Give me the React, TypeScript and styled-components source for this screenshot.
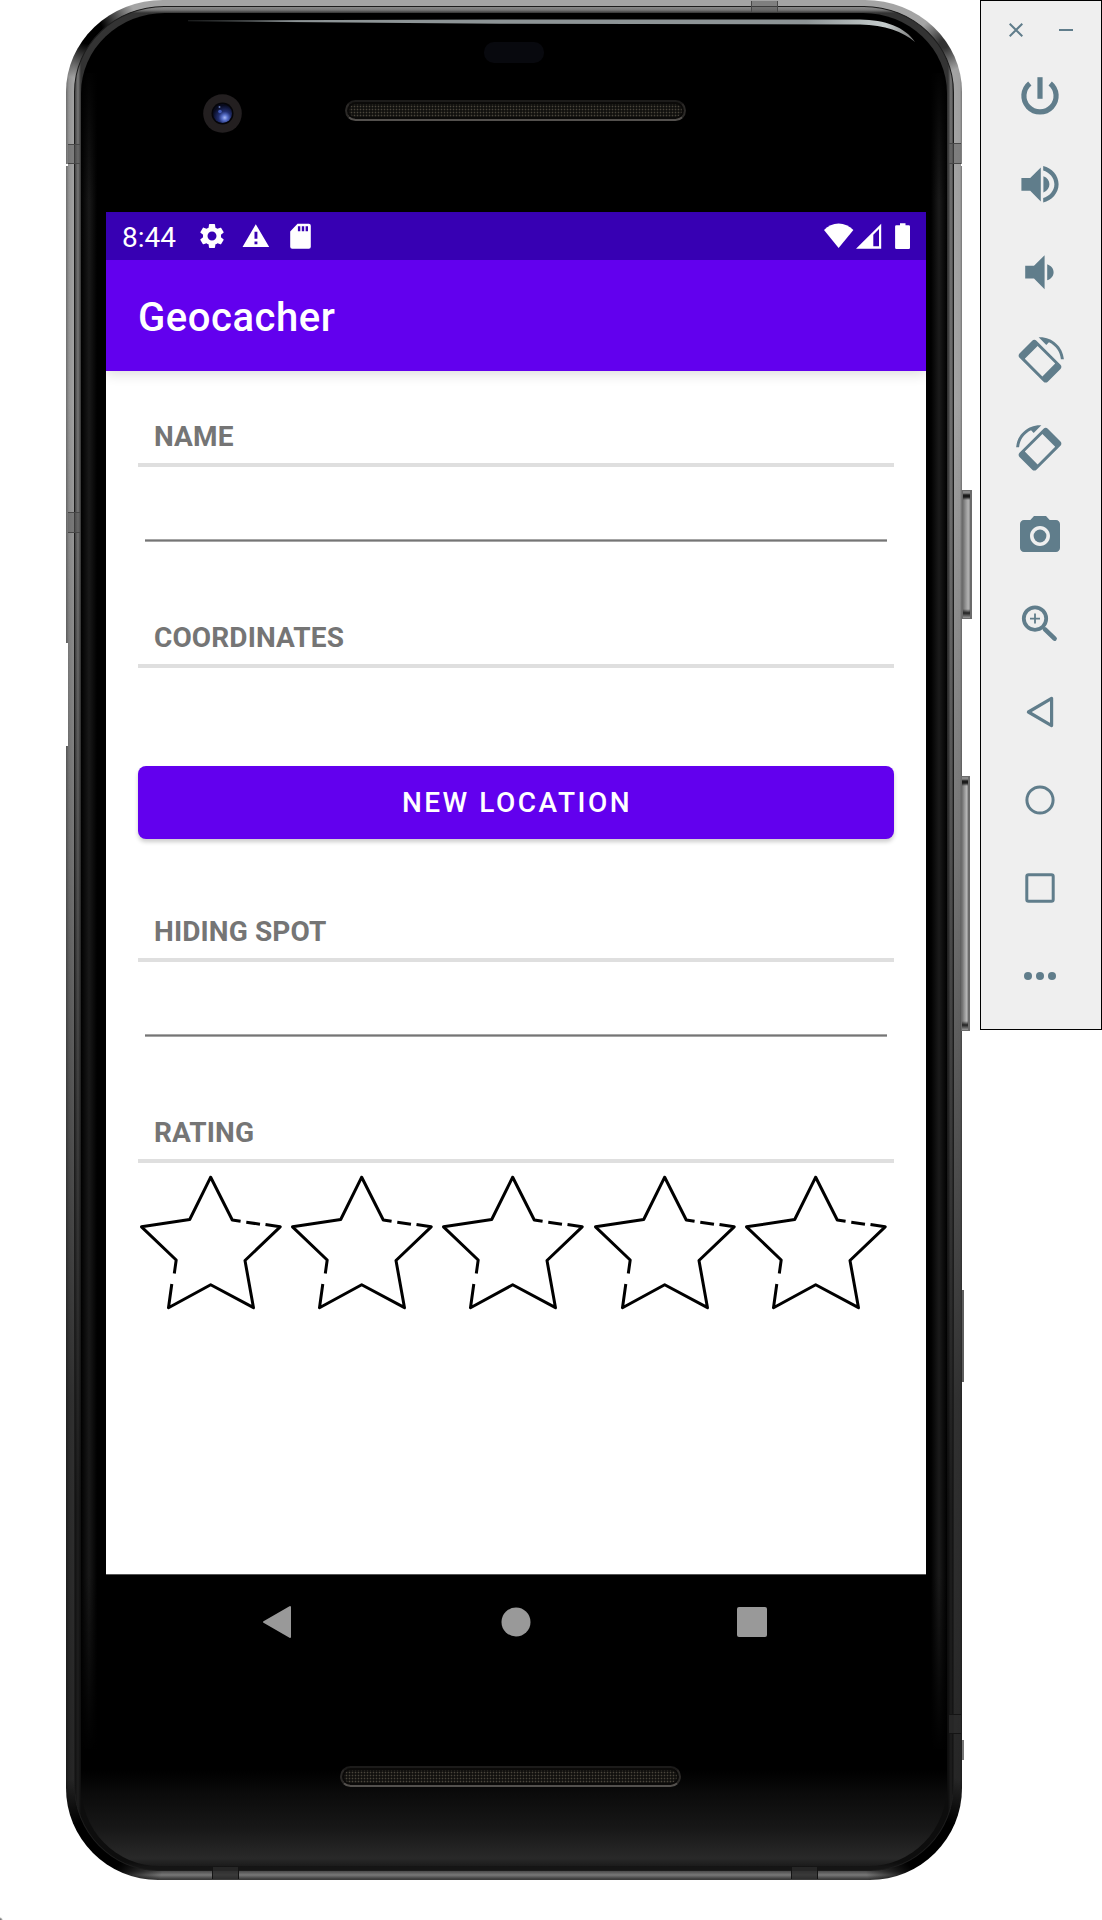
import React from 'react';
import styled, { createGlobalStyle } from 'styled-components';

const GlobalStyle = createGlobalStyle`
  * { box-sizing: border-box; }
  body { margin: 0; background: #fff; font-family: Roboto, "Liberation Sans", sans-serif; }
  svg { display: block; }
`;

const Desktop = styled.div`
  display: flex;
  align-items: flex-start;
  width: 1102px;
  height: 1920px;
  padding-left: 66px;
  overflow: hidden;
  background: radial-gradient(circle at 0 100%, #777 1px, transparent 3px);
`;

/* ---------- phone hardware ---------- */

const Chassis = styled.div`
  position: relative;
  flex: none;
  width: 896px;
  height: 1880px;
  margin-right: 18px;
  padding: 6px 8px 9px;
  border-radius: 97px 97px 92px 92px / 92px;
  background:
    radial-gradient(circle at 22px 30px, #000 14px, transparent 50px),
    radial-gradient(circle at 878px 44px, rgba(0, 0, 0, 0.7) 4px, transparent 28px),
    radial-gradient(circle at 26px 1850px, #000 30px, transparent 74px),
    radial-gradient(circle at 870px 1850px, #000 30px, transparent 74px),
    linear-gradient(to bottom, transparent 1862px, #4b4b4b 1871px, #787878 1875px, #3c3c3c 1879px),
    linear-gradient(to bottom, transparent 8px, transparent 400px, rgba(0, 0, 0, 0.28) 850px, rgba(0, 0, 0, 0.7) 1400px, rgba(0, 0, 0, 0.78)),
    linear-gradient(to right, #6c6c6c 0, #949494 3px, #a4a4a4 8px, #a4a4a4 888px, #9f9f9f 894px, #747474 896px);
`;

const Rim = styled.div`
  height: 100%;
  padding: 6px 6px 4px;
  border-radius: 90px 90px 84px 84px / 86px;
  border: 1px solid #1c1c1c;
  background:
    linear-gradient(to bottom, #8a8a8a, #777 3px, #333 6px, transparent 8px),
    linear-gradient(to bottom, transparent 1855px, #151515 1860px),
    linear-gradient(to bottom, transparent 500px, rgba(0, 0, 0, 0.75) 1500px),
    linear-gradient(to right, #444 0, #777 3px, #333 6px, #333 873px, #777 876px, #444 100%);
`;

const Face = styled.div`
  display: flex;
  flex-direction: column;
  align-items: center;
  height: 100%;
  border-radius: 84px 84px 78px 78px / 80px;
  background:
    linear-gradient(to bottom, #000, transparent) 0 50px / 100% 140px no-repeat,
    linear-gradient(to bottom, transparent, #000) 0 1560px / 100% 180px no-repeat,
    linear-gradient(to right, transparent, #191919 8px, transparent 16px) 0 60px / 16px 1676px no-repeat,
    linear-gradient(to left, transparent, #1b1b1b 8px, transparent 16px) 100% 60px / 16px 1676px no-repeat,
    linear-gradient(to bottom, #000, #0b0b0b 25%, #171717 60%, #292929 92%, #1b1b1b) 0 100% / 100% 96px no-repeat,
    #000;
`;

const TopBezel = styled.div`
  display: flex;
  flex-direction: column;
  width: 100%;
  height: 199px;
  padding: 29px 0 0 122px;
`;

const Sensor = styled.div`
  width: 60px;
  height: 21px;
  margin-left: 281px;
  border-radius: 10px;
  background: #08090e;
`;

const OpticsRow = styled.div`
  display: flex;
  align-items: flex-start;
  gap: 103px;
  margin-top: 31px;
`;

const Speaker = styled.div`
  width: 341px;
  height: 21px;
  border: 2px solid #2b2927;
  border-top-color: #1c1b1a;
  border-bottom-color: #53504d;
  border-radius: 11px;
  background:
    radial-gradient(circle, #4a453c 0.7px, transparent 1.1px) 0 0 / 3px 3px,
    #12110f;
  box-shadow: inset 0 0 0 2px #0b0a09;
`;

const TopSpeaker = styled(Speaker)`
  margin-top: 6px;
`;

const BottomBezel = styled.div`
  display: flex;
  justify-content: center;
  flex: 1;
  width: 100%;
  padding: 96px 8px 0 0;
`;

const GlareLayer = styled.svg`
  position: absolute;
  left: 0;
  top: 0;
`;

type Box = { $x: number; $y: number; $w: number; $h: number };

const AntennaBand = styled.div<Box & { $dark?: boolean; $vertical?: boolean }>`
  position: absolute;
  left: ${(p) => p.$x}px;
  top: ${(p) => p.$y}px;
  width: ${(p) => p.$w}px;
  height: ${(p) => p.$h}px;
  background: ${(p) => (p.$dark ? 'rgba(42, 42, 42, 0.8)' : 'rgba(90, 90, 90, 0.5)')};
  border: 0 solid ${(p) => (p.$dark ? '#141414' : '#474747')};
  border-width: ${(p) => (p.$vertical ? '0 1px' : '1px 0')};
`;

const SideKey = styled.div<Box>`
  position: absolute;
  left: ${(p) => p.$x}px;
  top: ${(p) => p.$y}px;
  width: ${(p) => p.$w}px;
  height: ${(p) => p.$h}px;
  border: 1px solid #6b6b6b;
  border-width: 1px 2px 1px 1px;
  background:
    linear-gradient(to bottom, #888 2px, #1b1b1b 4px, #1b1b1b 6px, transparent 9px, transparent calc(100% - 9px), #222 calc(100% - 5px), #999),
    linear-gradient(to right, #6e6e6e, #959595 40%, #b4b4b4 75%, #8a8a8a);
`;

const EdgeSliver = styled.div<Box & { $color: string }>`
  position: absolute;
  left: ${(p) => p.$x}px;
  top: ${(p) => p.$y}px;
  width: ${(p) => p.$w}px;
  height: ${(p) => p.$h}px;
  background: ${(p) => p.$color};
`;

/* ---------- device screen ---------- */

const Screen = styled.div`
  display: flex;
  flex-direction: column;
  flex: none;
  width: 820px;
  height: 1362px;
  margin-left: 4px;
  background: #fff;
`;

const StatusBar = styled.div`
  display: flex;
  justify-content: space-between;
  align-items: center;
  height: 48px;
  padding: 0 14px 0 16px;
  background: #3700b3;
  color: #fff;
`;

const StatusGroup = styled.div`
  display: flex;
  align-items: center;
`;

const Clock = styled.span`
  width: 75px;
  padding-top: 3px;
  font-size: 28px;
  line-height: 32px;
`;

const AppBar = styled.header`
  display: flex;
  align-items: center;
  height: 111px;
  padding: 5px 32px 0;
  background: #6200ee;
  box-shadow: 0 3px 12px rgba(0, 0, 0, 0.14);
  clip-path: inset(0 0 -20px 0);
`;

const Title = styled.h1`
  margin: 0;
  color: #fff;
  font-size: 40px;
  font-weight: 500;
  line-height: 48px;
  letter-spacing: 0.55px;
`;

const Form = styled.main`
  display: flex;
  flex-direction: column;
  padding: 44px 32px 0;
`;

const Section = styled.section<{ $h: number }>`
  display: flex;
  flex-direction: column;
  height: ${(p) => p.$h}px;
`;

const Label = styled.h2`
  margin: 0;
  padding: 4px 16px 0;
  height: 52px;
  border-bottom: 4px solid #dfdfdf;
  color: #757575;
  font-size: 28px;
  font-weight: 700;
  line-height: 36px;
  letter-spacing: 0.12px;
`;

const Field = styled.input`
  display: block;
  width: 742px;
  height: 75px;
  margin-left: 7px;
  padding: 0 8px;
  border: 0;
  outline: 0;
  background: linear-gradient(to bottom, #a6a6a6 1px, #757575 1px, #757575 2px, #a6a6a6 2px) 0 100% / 100% 3px no-repeat;
  font: 400 36px Roboto, sans-serif;
`;

const LocationButton = styled.button`
  height: 73px;
  margin-top: 98px;
  padding: 1px 0 0 2px;
  border: 0;
  border-radius: 8px;
  background: #6200ee;
  color: #fff;
  font: 500 28px/36px Roboto, sans-serif;
  letter-spacing: 2.5px;
  box-shadow: 0 3px 4px rgba(0, 0, 0, 0.2);
`;

const Stars = styled.div`
  display: flex;
`;

const NavBar = styled.nav`
  display: flex;
  justify-content: space-between;
  align-items: center;
  flex: none;
  width: 820px;
  height: 96px;
  margin-left: 4px;
  padding: 0 154px 1px;
  border-top: 1px solid #555;
`;

/* ---------- emulator toolbar ---------- */

const Toolbar = styled.aside`
  flex: none;
  width: 122px;
  height: 1030px;
  border: 1px solid #000;
  background: #efefef;
`;

const WindowControls = styled.div`
  display: flex;
  align-items: center;
  gap: 36px;
  height: 51px;
  padding: 7px 0 0 28px;
`;

const ToolButton = styled.button`
  display: flex;
  justify-content: center;
  align-items: center;
  width: 118px;
  height: 88px;
  padding: 0;
  border: 0;
  background: transparent;
  color: #607d8b;
`;

function Star() {
  return (
    <svg width="151.2" height="150" viewBox="0 0 151.2 150" fill="none" stroke="#000" strokeWidth="3" strokeLinejoin="round">
      <path d="M102.6 58.3 94.3 57 72.7 14.2 51.7 56.5 3.5 63.8 38.2 97 36.3 110.5" />
      <path d="M33.8 121 30.5 144.7 72.7 121.8 115.5 144.7 107 97.5 142.2 63.8 127.5 61.5" />
      <path d="M108.3 59.2 122 61.2" />
    </svg>
  );
}

function RotateShape() {
  return (
    <path
      fillRule="evenodd"
      transform="translate(0 .6)"
      d="M16.480 2.520c3.270 1.550 5.610 4.720 5.970 8.480h1.500C23.440 4.840 18.290 0 12 0l-.660.030 3.810 3.810 1.330-1.320zM10.230 1.750c-.590-.590-1.540-.590-2.120 0L1.750 8.110c-.590.590-.590 1.540 0 2.120l12.020 12.020c.590.590 1.540.590 2.120 0l6.360-6.360c.590-.590.590-1.540 0-2.120zM10.800 4.400 19.600 13.200 13.200 19.600 4.400 10.800z"
    />
  );
}

const tools: { name: string; icon: React.ReactNode }[] = [
  { name: 'Power', icon: <g fill="none" stroke="currentColor" strokeWidth="2.600"><path d="M12 2.600v10.800" /><path d="M6.900 5.700a8.050 8.050 0 1 0 10.200 0" /></g> },
  { name: 'Volume up', icon: <path d="M2.700 9v6.400h4.400l5.300 5.300V3.700L7.100 9H2.700zm14 3.100c0-1.800-1-3.300-3-4v8.100c2-.8 3-2.300 3-4.100zM13.600 3v2.200c3 .9 5.600 3.600 5.600 6.900s-2.600 6-5.600 6.900v2.200c4.300-1 7.700-4.700 7.700-9.100S17.900 4 13.600 3z" /> },
  { name: 'Volume down', icon: <path d="M18.800 12.100c0-1.770-1.100-3.290-3.200-4.030v8.050c2.100-.730 3.200-2.250 3.200-4.020zM4.600 8.900v6.400h4.400l5.300 5.300V3.600L9 8.900H4.600z" /> },
  { name: 'Rotate left', icon: <RotateShape /> },
  { name: 'Rotate right', icon: <g transform="matrix(-1 0 0 1 24 0)"><RotateShape /></g> },
  { name: 'Screenshot', icon: <><circle cx="12" cy="12" r="3.200" /><path d="M9 2 7.170 4H4c-1.100 0-2 .9-2 2v12c0 1.100.9 2 2 2h16c1.100 0 2-.9 2-2V6c0-1.100-.9-2-2-2h-3.170L15 2H9zm3 15c-2.760 0-5-2.240-5-5s2.240-5 5-5 5 2.240 5 5-2.240 5-5 5z" /></> },
  { name: 'Zoom', icon: <g fill="none" stroke="currentColor"><circle cx="9.500" cy="9.300" r="5.600" strokeWidth="1.900" /><path d="M14.500 14.700 19.300 19.300" strokeWidth="2.300" strokeLinecap="round" /><path d="M9.500 6.800v5M7 9.300h5" strokeWidth="0.900" /></g> },
  { name: 'Back', icon: <path d="M17.800 5.200v13.600L6.200 12z" fill="none" stroke="currentColor" strokeWidth="1.600" strokeLinejoin="round" /> },
  { name: 'Home', icon: <circle cx="12" cy="12" r="6.550" fill="none" stroke="currentColor" strokeWidth="1.500" /> },
  { name: 'Overview', icon: <rect x="5.400" y="5.400" width="13.200" height="13.200" rx="0.900" fill="none" stroke="currentColor" strokeWidth="1.500" /> },
  { name: 'More', icon: <><circle cx="6" cy="12" r="2" /><circle cx="12" cy="12" r="2" /><circle cx="18" cy="12" r="2" /></> },
];

function PhoneStatusBar() {
  return (
    <StatusBar>
      <StatusGroup>
        <Clock>8:44</Clock>
        <svg width="30" height="30" viewBox="0 0 24 24" fill="#fff">
          <path d="M19.140 12.940c.040-.3.060-.610.060-.940 0-.320-.020-.640-.070-.940l2.030-1.580c.180-.140.230-.410.120-.610l-1.920-3.320c-.120-.220-.370-.290-.590-.220l-2.390.960c-.5-.380-1.030-.7-1.620-.940l-.360-2.540c-.040-.240-.240-.410-.480-.410h-3.840c-.240 0-.430.170-.470.410l-.360 2.540c-.590.240-1.130.570-1.620.940l-2.390-.960c-.220-.080-.470 0-.590.220L2.740 8.870c-.120.210-.080.470.120.610l2.030 1.580c-.050.300-.090.630-.090.940s.020.640.070.940l-2.030 1.580c-.180.140-.230.410-.120.610l1.920 3.320c.120.220.370.290.590.220l2.390-.960c.5.380 1.030.7 1.620.940l.360 2.540c.050.240.240.410.480.410h3.840c.240 0 .440-.170.470-.410l.360-2.540c.590-.240 1.130-.560 1.620-.940l2.390.960c.220.080.470 0 .590-.220l1.920-3.320c.120-.220.070-.470-.120-.610l-2.010-1.580zM12 15.600c-1.980 0-3.600-1.620-3.600-3.600s1.620-3.600 3.600-3.600 3.600 1.620 3.600 3.600-1.620 3.600-3.600 3.600z" />
        </svg>
        <svg width="44" height="30" viewBox="0 0 44 30" fill="#fff" fillRule="evenodd">
          <path d="M15.500 26h26.700L28.800 3.200zM27.500 10.800h2.900v7h-2.900zM27.500 20.500h2.900v2.800h-2.900z" />
        </svg>
        <svg width="42" height="30" viewBox="0 0 42 30" fill="#fff" fillRule="evenodd">
          <path d="M26.500 2.700H37.800a2 2 0 0 1 2 2V25.800a2 2 0 0 1-2 2H21.200a2 2 0 0 1-2-2V10.400zM26.900 5.200v5h2.400v-5zM30.800 5.200v5h2.400v-5zM34.600 5.200v5h2.400v-5z" />
        </svg>
      </StatusGroup>
      <StatusGroup>
        <svg width="90" height="30" viewBox="0 1 90 30" fill="#fff" fillRule="evenodd">
          <path d="M16.600 27.900 2 9.900C6 5.700 11 3.400 16.600 3.400S27.200 5.700 31.400 9.900z" />
          <path d="M34 28.700 59.200 3.700V28.700zM51.300 14.700V26.300H57V9z" />
          <path d="M78 3.200h5.500v2h3.300a1.200 1.200 0 0 1 1.200 1.200v21.300a1.300 1.300 0 0 1-1.300 1.300H74.400a1.300 1.300 0 0 1-1.300-1.300V6.400A1.200 1.200 0 0 1 74.300 5.200H78z" />
        </svg>
      </StatusGroup>
    </StatusBar>
  );
}

function CameraLens() {
  return (
    <svg width="39" height="39" viewBox="0 0 39 39">
      <defs>
        <radialGradient id="lens" cx="0.62" cy="0.72" r="0.65">
          <stop offset="0" stopColor="#a9b9f5" />
          <stop offset="0.22" stopColor="#5a72cc" />
          <stop offset="0.5" stopColor="#222f70" />
          <stop offset="1" stopColor="#080b20" />
        </radialGradient>
      </defs>
      <circle cx="19.500" cy="19.500" r="19.300" fill="#231f20" />
      <circle cx="19.500" cy="19.500" r="11" fill="#050509" />
      <circle cx="19.500" cy="19.500" r="9.500" fill="url(#lens)" />
      <circle cx="17" cy="17.500" r="1.800" fill="#4059b5" />
      <circle cx="16.500" cy="13" r="1" fill="#6075b0" />
    </svg>
  );
}

export default function App() {
  return (
    <>
      <GlobalStyle />
      <Desktop>
        <Chassis>
          <Rim>
            <Face>
              <TopBezel>
                <Sensor />
                <OpticsRow>
                  <CameraLens />
                  <TopSpeaker />
                </OpticsRow>
              </TopBezel>
              <Screen>
                <PhoneStatusBar />
                <AppBar>
                  <Title>Geocacher</Title>
                </AppBar>
                <Form>
                  <Section $h={201}>
                    <Label>NAME</Label>
                    <Field aria-label="Name" />
                  </Section>
                  <Section $h={294}>
                    <Label>COORDINATES</Label>
                    <LocationButton>NEW LOCATION</LocationButton>
                  </Section>
                  <Section $h={201}>
                    <Label>HIDING SPOT</Label>
                    <Field aria-label="Hiding spot" />
                  </Section>
                  <Section $h={202}>
                    <Label>RATING</Label>
                    <Stars>
                      {[1, 2, 3, 4, 5].map((n) => (
                        <Star key={n} />
                      ))}
                    </Stars>
                  </Section>
                </Form>
              </Screen>
              <NavBar>
                <svg width="40" height="40" viewBox="0 0 40 40" fill="#999" stroke="#999" strokeWidth="2" strokeLinejoin="round">
                  <path d="M4 20 30 5v30z" />
                </svg>
                <svg width="40" height="40" viewBox="0 0 40 40" fill="#999">
                  <circle cx="20" cy="20" r="14.500" />
                </svg>
                <svg width="40" height="40" viewBox="0 0 40 40" fill="#999">
                  <rect x="5" y="5" width="30" height="30" rx="2" />
                </svg>
              </NavBar>
              <BottomBezel>
                <Speaker />
              </BottomBezel>
            </Face>
          </Rim>
          <GlareLayer width="896" height="60" viewBox="66 0 896 60">
            <defs>
              <linearGradient id="glare">
                <stop offset="0" stopColor="#6d7476" stopOpacity="0.300" />
                <stop offset="0.150" stopColor="#8d9496" />
                <stop offset="0.850" stopColor="#8d9496" />
                <stop offset="0.960" stopColor="#c6cdcd" />
                <stop offset="1" stopColor="#777" />
              </linearGradient>
            </defs>
            <path fill="url(#glare)" d="M188 20.300 500 19.600H860C885 20 905 27 915 42 903 32 885 25 860 24.600L500 23.700 188 21.300z" />
          </GlareLayer>
          <AntennaBand $x={2} $y={144} $w={12} $h={20} />
          <AntennaBand $x={2} $y={512} $w={12} $h={21} />
          <AntennaBand $x={883} $y={143} $w={12} $h={21} />
          <AntennaBand $x={685} $y={1} $w={27} $h={11} $vertical />
          <AntennaBand $x={883} $y={1714} $w={12} $h={20} $dark />
          <AntennaBand $x={146} $y={1867} $w={27} $h={12} $dark $vertical />
          <AntennaBand $x={725} $y={1867} $w={27} $h={12} $dark $vertical />
          <SideKey $x={896} $y={490} $w={10} $h={129} />
          <SideKey $x={895} $y={776} $w={9} $h={255} />
          <EdgeSliver $x={896} $y={1290} $w={2} $h={92} $color="#5e5e5e" />
          <EdgeSliver $x={896} $y={1740} $w={2} $h={20} $color="#777" />
          <EdgeSliver $x={0} $y={643} $w={2} $h={103} $color="#fff" />
          <EdgeSliver $x={0} $y={164} $w={2} $h={2} $color="#fff" />
          <EdgeSliver $x={895} $y={164} $w={2} $h={2} $color="#fff" />
        </Chassis>
        <Toolbar>
          <WindowControls>
            <svg width="14" height="14" viewBox="0 0 14 14" stroke="#607d8b" strokeWidth="2">
              <path d="M.7.700 13.300 13.300M13.300.700.700 13.300" />
            </svg>
            <svg width="14" height="14" viewBox="0 0 14 14" stroke="#607d8b" strokeWidth="2">
              <path d="M0 7h14" />
            </svg>
          </WindowControls>
          {tools.map((tool) => (
            <ToolButton key={tool.name} aria-label={tool.name}>
              <svg width="48" height="48" viewBox="0 0 24 24" fill="currentColor">
                {tool.icon}
              </svg>
            </ToolButton>
          ))}
        </Toolbar>
      </Desktop>
    </>
  );
}
